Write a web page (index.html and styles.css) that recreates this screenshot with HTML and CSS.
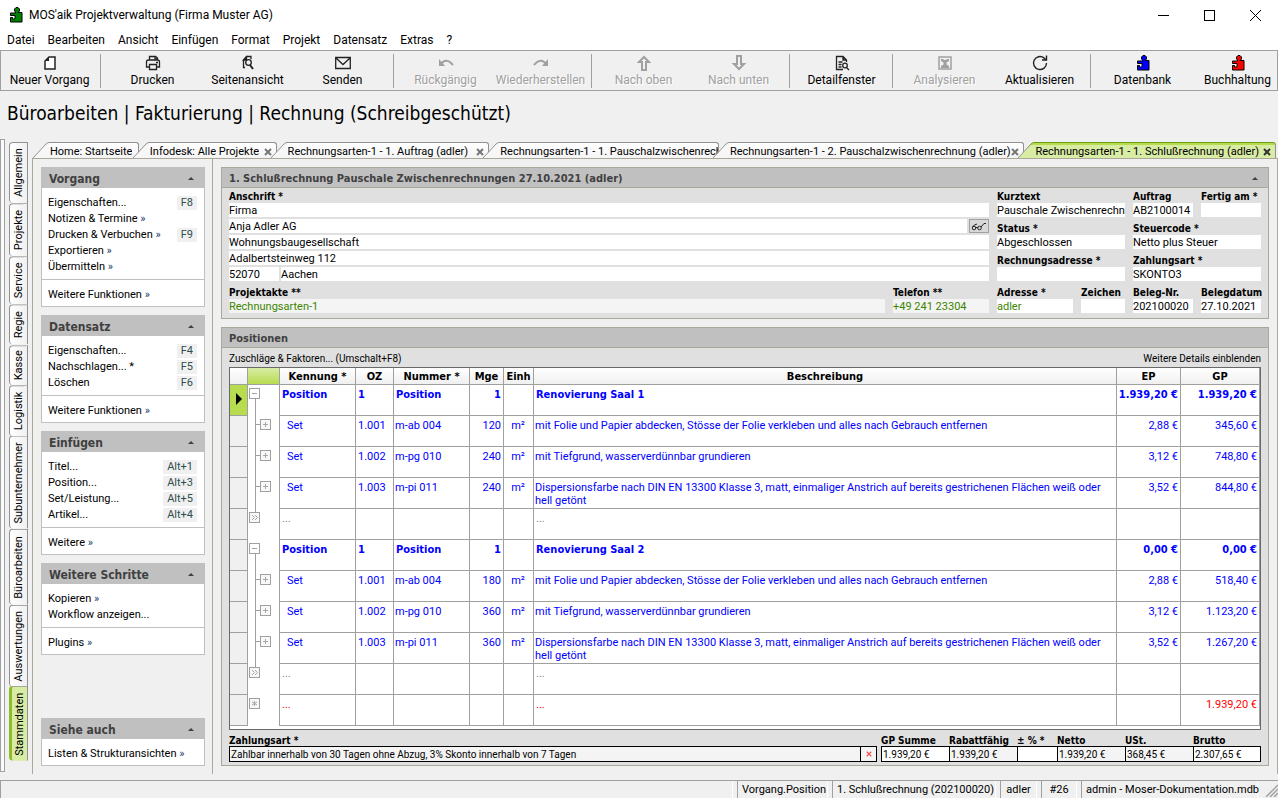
FILE: index.html
```html
<!DOCTYPE html>
<html lang="de">
<head>
    <meta charset="UTF-8">
    <meta name="viewport" content="width=device-width, initial-scale=1.0">
    <title>MOS'aik Projektverwaltung (Firma Muster AG)</title>
    <link rel="stylesheet" href="styles.css">
</head>
<body>
    <!-- Shared icon shapes -->
    <svg class="sprite" width="0" height="0" aria-hidden="true">
        <symbol id="puzzle" viewBox="0 0 14 16">
            <path d="M7 .5h2l1.500 1.500v2L9 5.500h4V15H1.500v-4.500h2V12H6V8.500H1.500V6h5V5L5.500 4V2z" fill="currentColor" stroke="#000" stroke-width="1"/>
        </symbol>
        <symbol id="close" viewBox="0 0 8 8">
            <path d="M1 1l6 6M7 1L1 7" fill="none" stroke="currentColor" stroke-width="2"/>
        </symbol>
        <symbol id="up" viewBox="0 0 6 4">
            <path d="M3 0l3 3H0z" fill="currentColor"/>
        </symbol>
        <symbol id="slant" viewBox="0 0 16 16">
            <path d="M0 16L13 2Q14.500 .5 16 .5V16z" fill="#f7f7f7"/>
            <path d="M0 16L13 2Q14.500 .5 16 .5" fill="none" stroke="#919191"/>
        </symbol>
        <symbol id="slant-active" viewBox="0 0 16 16">
            <path d="M0 16L13 2Q14.500 .5 16 .5V16z" fill="#d8eca4"/>
            <path d="M12 3L14 1h2v2z" fill="#b8dc50"/>
            <path d="M0 16L13 2" fill="none" stroke="#919191"/>
            <path d="M12.500 2.500Q14.500 .5 16 .5" fill="none" stroke="#6a9e10"/>
        </symbol>
        <symbol id="node-open" viewBox="0 0 32 31">
            <path d="M7.500 14v17" stroke="#a0a0a0"/>
            <rect x="1.500" y="3.500" width="10" height="10" fill="#fff" stroke="#a0a0a0"/>
            <path d="M4 8.500h5" stroke="#a0a0a0"/>
        </symbol>
        <symbol id="node-child" viewBox="0 0 32 31">
            <path d="M7.500 0v31M8 8.500h4" stroke="#a0a0a0"/>
            <rect x="12.500" y="3.500" width="10" height="10" fill="#f8f8f8" stroke="#a0a0a0"/>
            <path d="M15 8.500h5M17.500 6v5" stroke="#a8a8a8"/>
        </symbol>
        <symbol id="node-end" viewBox="0 0 32 31">
            <path d="M7.500 0v3" stroke="#a0a0a0"/>
            <rect x="1.500" y="3.500" width="10" height="10" fill="#f8f8f8" stroke="#a0a0a0"/>
            <path d="M4 6l2.500 2.500L4 11M7 6l2.500 2.500L7 11" fill="none" stroke="#a8a8b4"/>
        </symbol>
        <symbol id="node-new" viewBox="0 0 32 31">
            <rect x="1.500" y="3.500" width="10" height="10" fill="#f8f8f8" stroke="#a0a0a0"/>
            <path d="M6.500 6v5M4 7l5 3M9 7l-5 3" stroke="#a8a8a8"/>
        </symbol>
    </svg>

    <header class="titlebar">
        <svg class="app-icon" width="14" height="16"><use href="#puzzle"/></svg>
        <span class="title">MOS'aik Projektverwaltung (Firma Muster AG)</span>
        <div class="window-buttons">
            <button type="button" aria-label="Minimieren"><svg width="11" height="11"><path d="M0 5.500h11" stroke="#000"/></svg></button>
            <button type="button" aria-label="Maximieren"><svg width="11" height="11"><rect x=".5" y=".5" width="10" height="10" fill="none" stroke="#000"/></svg></button>
            <button type="button" aria-label="Schließen"><svg width="11" height="11"><path d="M0 0l11 11M11 0L0 11" stroke="#000"/></svg></button>
        </div>
    </header>

    <nav class="menubar">
        <a href="#">Datei</a>
        <a href="#">Bearbeiten</a>
        <a href="#">Ansicht</a>
        <a href="#">Einfügen</a>
        <a href="#">Format</a>
        <a href="#">Projekt</a>
        <a href="#">Datensatz</a>
        <a href="#">Extras</a>
        <a href="#">?</a>
    </nav>

    <div class="toolbar">
        <div class="tool-group">
            <button type="button"><svg width="16" height="16" viewBox="0 0 16 16"><path d="M7 2h6v12H3V6z" fill="#fff" stroke="#222" stroke-width="1.500"/><path d="M3 6h4V2z" fill="#222"/></svg>Neuer Vorgang</button>
        </div>
        <div class="tool-group">
            <button type="button"><svg width="16" height="16" viewBox="0 0 16 16" fill="none" stroke="#222" stroke-width="1.300"><path d="M4.500 5V1.500h6L12.500 3v2M4 12H1.500V7Q1.500 5 3.500 5h9Q14.500 5 14.500 7v5H12M4.500 9.500h7v5h-7z"/><path d="M10 1.500V4h2.500M11 7.500h2"/></svg>Drucken</button>
            <button type="button"><svg width="16" height="16" viewBox="0 0 16 16" fill="none" stroke="#222" stroke-width="1.300"><path d="M5 12.500H3.500V5l3-3.500h4.500V4"/><path d="M3.500 5h3V2z" fill="#222"/><circle cx="8.500" cy="7.500" r="2.800"/><path d="M10 10l3 4" stroke-width="2"/></svg>Seitenansicht</button>
            <button type="button"><svg width="16" height="16" viewBox="0 0 16 16" fill="none" stroke="#222" stroke-width="1.300"><path d="M.700 2.500h14.600v11H.700zM1 3l7 6.500L15 3"/></svg>Senden</button>
        </div>
        <div class="tool-group">
            <button type="button" disabled><svg width="16" height="16" viewBox="0 0 16 16" fill="none" stroke="#a0a0a0" stroke-width="2"><path d="M3 9Q8 2 15 10"/><path d="M1 4v7h6z" fill="#a0a0a0" stroke="none"/></svg>Rückgängig</button>
            <button type="button" disabled><svg width="16" height="16" viewBox="0 0 16 16" fill="none" stroke="#a0a0a0" stroke-width="2"><path d="M13 9Q8 2 1 10"/><path d="M15 4v7H9z" fill="#a0a0a0" stroke="none"/></svg>Wiederherstellen</button>
        </div>
        <div class="tool-group">
            <button type="button" disabled><svg width="16" height="16" viewBox="0 0 16 16" fill="none" stroke="#a0a0a0" stroke-width="2"><path d="M6 15V7H3l5-5 5 5h-3v8z"/></svg>Nach oben</button>
            <button type="button" disabled><svg width="16" height="16" viewBox="0 0 16 16" fill="none" stroke="#a0a0a0" stroke-width="2"><path d="M6 1v8H3l5 5 5-5h-3V1z"/></svg>Nach unten</button>
        </div>
        <div class="tool-group">
            <button type="button"><svg width="16" height="16" viewBox="0 0 16 16" fill="none" stroke="#222" stroke-width="1.300"><path d="M9 14.500H2.500v-13H9L12.500 5v2M9 1.500V5h3.500M4.500 7h4M4.500 9.500h3M4.500 12h3"/><circle cx="11" cy="10.500" r="2.300"/><path d="M12.500 12.500l2.500 2.500"/></svg>Detailfenster</button>
        </div>
        <div class="tool-group">
            <button type="button" disabled><svg width="16" height="16" viewBox="0 0 16 16" fill="none" stroke="#a0a0a0" stroke-width="1.500"><path d="M2 2h12v12H2z"/><path d="M4 4h2.500v1h3V4H12v2L9.500 7.500v2L12 11v2H4v-2l2.500-1.500v-2L4 6z" fill="#a0a0a0" stroke="none"/></svg>Analysieren</button>
            <button type="button"><svg width="16" height="16" viewBox="0 0 16 16" fill="none" stroke="#222" stroke-width="1.400"><path d="M14.500 8a6.500 6.500 0 1 1-2.500-5.100L14 5"/><path d="M14.500 .500V5H10"/></svg>Aktualisieren</button>
        </div>
        <div class="tool-group">
            <button type="button"><svg class="blue" width="14" height="16"><use href="#puzzle"/></svg>Datenbank</button>
            <button type="button"><svg class="red" width="14" height="16"><use href="#puzzle"/></svg>Buchhaltung</button>
        </div>
    </div>

    <h1 class="page-title">Büroarbeiten | Fakturierung | Rechnung (Schreibgeschützt)</h1>

    <div class="workspace">
        <div class="grip"></div>

        <nav class="side-tabs">
            <a href="#" class="side-allgemein">Allgemein</a>
            <a href="#" class="side-projekte">Projekte</a>
            <a href="#" class="side-service">Service</a>
            <a href="#" class="side-regie">Regie</a>
            <a href="#" class="side-kasse">Kasse</a>
            <a href="#" class="side-logistik">Logistik</a>
            <a href="#" class="side-sub">Subunternehmer</a>
            <a href="#" class="side-buero">Büroarbeiten</a>
            <a href="#" class="side-auswertungen">Auswertungen</a>
            <a href="#" class="side-stammdaten active">Stammdaten</a>
        </nav>

        <div class="content">
            <!-- Document tabs -->
            <div class="tabs">
                <div class="tab tab-home"><svg class="slant" width="16" height="16"><use href="#slant"/></svg><div class="tab-body"><a href="#">Home: Startseite</a></div></div>
                <div class="tab tab-infodesk"><svg class="slant" width="16" height="16"><use href="#slant"/></svg><div class="tab-body"><a href="#">Infodesk: Alle Projekte</a><button type="button" aria-label="Schließen"><svg width="8" height="8"><use href="#close"/></svg></button></div></div>
                <div class="tab tab-auftrag"><svg class="slant" width="16" height="16"><use href="#slant"/></svg><div class="tab-body"><a href="#">Rechnungsarten-1 - 1. Auftrag (adler)</a><button type="button" aria-label="Schließen"><svg width="8" height="8"><use href="#close"/></svg></button></div></div>
                <div class="tab tab-zwischen1"><svg class="slant" width="16" height="16"><use href="#slant"/></svg><div class="tab-body"><a href="#">Rechnungsarten-1 - 1. Pauschalzwischenrechnung (adler)</a></div></div>
                <div class="tab tab-zwischen2"><svg class="slant" width="16" height="16"><use href="#slant"/></svg><div class="tab-body"><a href="#">Rechnungsarten-1 - 2. Pauschalzwischenrechnung (adler)</a><button type="button" aria-label="Schließen"><svg width="8" height="8"><use href="#close"/></svg></button></div></div>
                <div class="tab tab-schluss active"><svg class="slant" width="16" height="16"><use href="#slant-active"/></svg><div class="tab-body"><a href="#">Rechnungsarten-1 - 1. Schlußrechnung (adler)</a><button type="button" aria-label="Schließen"><svg width="8" height="8"><use href="#close"/></svg></button></div></div>
            </div>

            <div class="columns">
                <aside class="sidebar">
                    <section class="card">
                        <h2>Vorgang<svg width="6" height="4"><use href="#up"/></svg></h2>
                        <ul>
                            <li><a href="#">Eigenschaften...</a><kbd>F8</kbd></li>
                            <li><a href="#">Notizen &amp; Termine <i>»</i></a></li>
                            <li><a href="#">Drucken &amp; Verbuchen <i>»</i></a><kbd>F9</kbd></li>
                            <li><a href="#">Exportieren <i>»</i></a></li>
                            <li><a href="#">Übermitteln <i>»</i></a></li>
                        </ul>
                        <ul>
                            <li><a href="#">Weitere Funktionen <i>»</i></a></li>
                        </ul>
                    </section>
                    <section class="card">
                        <h2>Datensatz<svg width="6" height="4"><use href="#up"/></svg></h2>
                        <ul>
                            <li><a href="#">Eigenschaften...</a><kbd>F4</kbd></li>
                            <li><a href="#">Nachschlagen... *</a><kbd>F5</kbd></li>
                            <li><a href="#">Löschen</a><kbd>F6</kbd></li>
                        </ul>
                        <ul>
                            <li><a href="#">Weitere Funktionen <i>»</i></a></li>
                        </ul>
                    </section>
                    <section class="card">
                        <h2>Einfügen<svg width="6" height="4"><use href="#up"/></svg></h2>
                        <ul>
                            <li><a href="#">Titel...</a><kbd>Alt+1</kbd></li>
                            <li><a href="#">Position...</a><kbd>Alt+3</kbd></li>
                            <li><a href="#">Set/Leistung...</a><kbd>Alt+5</kbd></li>
                            <li><a href="#">Artikel...</a><kbd>Alt+4</kbd></li>
                        </ul>
                        <ul>
                            <li><a href="#">Weitere <i>»</i></a></li>
                        </ul>
                    </section>
                    <section class="card">
                        <h2>Weitere Schritte<svg width="6" height="4"><use href="#up"/></svg></h2>
                        <ul>
                            <li><a href="#">Kopieren <i>»</i></a></li>
                            <li><a href="#">Workflow anzeigen...</a></li>
                        </ul>
                        <ul>
                            <li><a href="#">Plugins <i>»</i></a></li>
                        </ul>
                    </section>
                    <section class="card card-bottom">
                        <h2>Siehe auch<svg width="6" height="4"><use href="#up"/></svg></h2>
                        <ul>
                            <li><a href="#">Listen &amp; Strukturansichten <i>»</i></a></li>
                        </ul>
                    </section>
                </aside>

                <main class="main">
                    <!-- Document header data -->
                    <section class="panel">
                        <h2>1. Schlußrechnung Pauschale Zwischenrechnungen 27.10.2021 (adler)<svg width="6" height="4"><use href="#up"/></svg></h2>
                        <form class="head-form">
                            <div class="address">
                                <label for="anrede">Anschrift *</label>
                                <input type="text" id="anrede" value="Firma">
                                <div class="line">
                                    <input type="text" aria-label="Name" value="Anja Adler AG">
                                    <button type="button" aria-label="Ansehen"><svg width="16" height="9" viewBox="0 0 16 9" fill="none" stroke="#222"><circle cx="3" cy="6" r="1.800"/><circle cx="8.500" cy="6" r="1.800"/><path d="M1.500 5Q3 2.500 6 2M10 5l3-3.500h2M4.500 5.500h2.500"/></svg></button>
                                </div>
                                <input type="text" aria-label="Zusatz" value="Wohnungsbaugesellschaft">
                                <input type="text" aria-label="Straße" value="Adalbertsteinweg 112">
                                <div class="line">
                                    <input class="zip" type="text" aria-label="PLZ" value="52070">
                                    <input type="text" aria-label="Ort" value="Aachen">
                                </div>
                                <div class="line refs">
                                    <div class="field"><label for="akte">Projektakte **</label><input class="ref" type="text" id="akte" value="Rechnungsarten-1" readonly></div>
                                    <div class="field phone"><label for="telefon">Telefon **</label><input class="ref" type="text" id="telefon" value="+49 241 23304" readonly></div>
                                </div>
                            </div>
                            <div class="details">
                                <div class="field wide"><label for="kurztext">Kurztext</label><input type="text" id="kurztext" value="Pauschale Zwischenrechnungen"></div>
                                <div class="field"><label for="auftrag">Auftrag</label><input type="text" id="auftrag" value="AB2100014"></div>
                                <div class="field"><label for="fertig">Fertig am *</label><input type="text" id="fertig"></div>
                                <div class="field wide"><label for="status">Status *</label><input type="text" id="status" value="Abgeschlossen"></div>
                                <div class="field double"><label for="steuer">Steuercode *</label><input type="text" id="steuer" value="Netto plus Steuer"></div>
                                <div class="field wide"><label for="radresse">Rechnungsadresse *</label><input type="text" id="radresse"></div>
                                <div class="field double"><label for="zart">Zahlungsart *</label><input type="text" id="zart" value="SKONTO3"></div>
                                <div class="field"><label for="adresse">Adresse *</label><input class="link" type="text" id="adresse" value="adler"></div>
                                <div class="field"><label for="zeichen">Zeichen</label><input type="text" id="zeichen"></div>
                                <div class="field"><label for="beleg">Beleg-Nr.</label><input type="text" id="beleg" value="202100020"></div>
                                <div class="field"><label for="datum">Belegdatum</label><input type="text" id="datum" value="27.10.2021"></div>
                            </div>
                        </form>
                    </section>

                    <!-- Line items -->
                    <section class="panel positions">
                        <h2>Positionen</h2>
                        <div class="positions-links">
                            <a href="#">Zuschläge &amp; Faktoren... (Umschalt+F8)</a>
                            <a href="#">Weitere Details einblenden</a>
                        </div>
                        <div class="grid-frame">
                            <table class="grid">
                                <colgroup>
                                    <col class="c-mark"><col class="c-tree"><col class="c-kennung"><col class="c-oz"><col class="c-nummer"><col class="c-mge"><col class="c-einh"><col><col class="c-ep"><col class="c-gp">
                                </colgroup>
                                <thead>
                                    <tr><th></th><th class="corner"></th><th>Kennung *</th><th>OZ</th><th>Nummer *</th><th>Mge</th><th>Einh</th><th>Beschreibung</th><th>EP</th><th>GP</th></tr>
                                </thead>
                                <tbody>
                                    <tr class="position"><td class="mark current"><svg width="6" height="12"><path d="M0 0l6 6-6 6z"/></svg></td><td class="tree"><button type="button" aria-label="Zuklappen"><svg width="32" height="31"><use href="#node-open"/></svg></button></td><td>Position</td><td>1</td><td>Position</td><td class="num">1</td><td></td><td>Renovierung Saal 1</td><td class="num">1.939,20 €</td><td class="num">1.939,20 €</td></tr>
                                    <tr><td class="mark"></td><td class="tree"><button type="button" aria-label="Aufklappen"><svg width="32" height="31"><use href="#node-child"/></svg></button></td><td class="set">Set</td><td>1.001</td><td>m-ab 004</td><td class="num">120</td><td class="unit">m²</td><td>mit Folie und Papier abdecken, Stösse der Folie verkleben und alles nach Gebrauch entfernen</td><td class="num">2,88 €</td><td class="num">345,60 €</td></tr>
                                    <tr><td class="mark"></td><td class="tree"><button type="button" aria-label="Aufklappen"><svg width="32" height="31"><use href="#node-child"/></svg></button></td><td class="set">Set</td><td>1.002</td><td>m-pg 010</td><td class="num">240</td><td class="unit">m²</td><td>mit Tiefgrund, wasserverdünnbar grundieren</td><td class="num">3,12 €</td><td class="num">748,80 €</td></tr>
                                    <tr><td class="mark"></td><td class="tree"><button type="button" aria-label="Aufklappen"><svg width="32" height="31"><use href="#node-child"/></svg></button></td><td class="set">Set</td><td>1.003</td><td>m-pi 011</td><td class="num">240</td><td class="unit">m²</td><td>Dispersionsfarbe nach DIN EN 13300 Klasse 3, matt, einmaliger Anstrich auf bereits gestrichenen Flächen weiß oder hell getönt</td><td class="num">3,52 €</td><td class="num">844,80 €</td></tr>
                                    <tr class="more"><td class="mark"></td><td class="tree"><button type="button" aria-label="Weitere"><svg width="32" height="31"><use href="#node-end"/></svg></button></td><td>...</td><td></td><td></td><td></td><td></td><td>...</td><td></td><td></td></tr>
                                    <tr class="position"><td class="mark"></td><td class="tree"><button type="button" aria-label="Zuklappen"><svg width="32" height="31"><use href="#node-open"/></svg></button></td><td>Position</td><td>1</td><td>Position</td><td class="num">1</td><td></td><td>Renovierung Saal 2</td><td class="num">0,00 €</td><td class="num">0,00 €</td></tr>
                                    <tr><td class="mark"></td><td class="tree"><button type="button" aria-label="Aufklappen"><svg width="32" height="31"><use href="#node-child"/></svg></button></td><td class="set">Set</td><td>1.001</td><td>m-ab 004</td><td class="num">180</td><td class="unit">m²</td><td>mit Folie und Papier abdecken, Stösse der Folie verkleben und alles nach Gebrauch entfernen</td><td class="num">2,88 €</td><td class="num">518,40 €</td></tr>
                                    <tr><td class="mark"></td><td class="tree"><button type="button" aria-label="Aufklappen"><svg width="32" height="31"><use href="#node-child"/></svg></button></td><td class="set">Set</td><td>1.002</td><td>m-pg 010</td><td class="num">360</td><td class="unit">m²</td><td>mit Tiefgrund, wasserverdünnbar grundieren</td><td class="num">3,12 €</td><td class="num">1.123,20 €</td></tr>
                                    <tr><td class="mark"></td><td class="tree"><button type="button" aria-label="Aufklappen"><svg width="32" height="31"><use href="#node-child"/></svg></button></td><td class="set">Set</td><td>1.003</td><td>m-pi 011</td><td class="num">360</td><td class="unit">m²</td><td>Dispersionsfarbe nach DIN EN 13300 Klasse 3, matt, einmaliger Anstrich auf bereits gestrichenen Flächen weiß oder hell getönt</td><td class="num">3,52 €</td><td class="num">1.267,20 €</td></tr>
                                    <tr class="more"><td class="mark"></td><td class="tree"><button type="button" aria-label="Weitere"><svg width="32" height="31"><use href="#node-end"/></svg></button></td><td>...</td><td></td><td></td><td></td><td></td><td>...</td><td></td><td></td></tr>
                                    <tr class="total"><td class="mark"></td><td class="tree"><button type="button" aria-label="Neu"><svg width="32" height="31"><use href="#node-new"/></svg></button></td><td>...</td><td></td><td></td><td></td><td></td><td>...</td><td></td><td class="num">1.939,20 €</td></tr>
                                </tbody>
                            </table>
                        </div>
                        <form class="sums">
                            <div class="field payment">
                                <label for="zahlung">Zahlungsart *</label>
                                <div class="payment-box">
                                    <input class="soft" type="text" id="zahlung" value="Zahlbar innerhalb von 30 Tagen ohne Abzug, 3% Skonto innerhalb von 7 Tagen">
                                    <button type="button" aria-label="Entfernen"><svg width="6" height="6" viewBox="0 0 8 8"><path d="M1 1l6 6M7 1L1 7" stroke="#f05050" stroke-width="1.500"/></svg></button>
                                </div>
                            </div>
                            <div class="totals">
                                <div class="field"><label for="gp">GP Summe</label><input type="text" id="gp" value="1.939,20 €"></div>
                                <div class="field"><label for="rabatt">Rabattfähig</label><input class="soft" type="text" id="rabatt" value="1.939,20 €"></div>
                                <div class="field"><label for="prozent">± % *</label><input type="text" id="prozent"></div>
                                <div class="field"><label for="netto">Netto</label><input class="soft" type="text" id="netto" value="1.939,20 €"></div>
                                <div class="field"><label for="ust">USt.</label><input class="soft" type="text" id="ust" value="368,45 €"></div>
                                <div class="field"><label for="brutto">Brutto</label><input type="text" id="brutto" value="2.307,65 €"></div>
                            </div>
                        </form>
                    </section>
                </main>
            </div>
        </div>
    </div>

    <footer class="statusbar">
        <span class="fill"></span>
        <span class="s-view">Vorgang.Position</span>
        <span class="s-doc">1. Schlußrechnung (202100020)</span>
        <span class="s-user">adler</span>
        <span class="s-count">#26</span>
        <span class="s-db">admin - Moser-Dokumentation.mdb</span>
        <svg width="16" height="16"><path d="M4 16L16 4M8 16l8-8M12 16l4-4" stroke="#a0a0a0" stroke-width="1.500"/></svg>
    </footer>
</body>
</html>
```
FILE: styles.css
```css
* {
    box-sizing: border-box;
}

body {
    margin: 0;
    min-height: 100vh;
    display: flex;
    flex-direction: column;
    background-color: #f0f0f0;
    color: #000;
    font-family: Roboto, 'DejaVu Sans Condensed', sans-serif;
    font-size: 11px;
    line-height: 16px;
    overflow: hidden;
}

a {
    color: inherit;
    text-decoration: none;
}

button,
input {
    font: inherit;
    color: inherit;
    margin: 0;
    padding: 0;
    border: none;
    border-radius: 0;
    background: none;
}

svg {
    display: block;
    flex: none;
}

.sprite {
    position: absolute;
}

/* Title bar */
.titlebar {
    display: flex;
    align-items: center;
    height: 30px;
    padding-left: 9px;
    background-color: #fff;
    font-size: 12px;
}

.app-icon {
    color: #008000;
    margin-right: 6px;
}

.window-buttons {
    display: flex;
    margin-left: auto;
}

.window-buttons button {
    width: 46px;
    height: 28px;
    display: flex;
    align-items: center;
    justify-content: center;
}

/* Menu */
.menubar {
    display: flex;
    gap: 13px;
    height: 20px;
    padding: 2px 7px;
    background-color: #fff;
    font-size: 12px;
}

/* Toolbar */
.toolbar {
    display: flex;
    height: 41px;
    padding-left: 1px;
    border: 1px solid #a0a0a0;
    overflow: hidden;
    font-size: 12px;
}

.tool-group {
    display: flex;
    flex: none;
    padding-right: 8px;
    background: linear-gradient(#a0a0a0, #a0a0a0) right 4px center / 1px 34px no-repeat;
}

.tool-group:last-child {
    background: none;
}

.tool-group button {
    width: 95px;
    padding-top: 4px;
    display: flex;
    flex-direction: column;
    align-items: center;
    gap: 1px;
    white-space: nowrap;
}

.tool-group button:disabled {
    color: #a0a0a0;
    text-shadow: 1px 1px #fff;
}

.blue {
    color: #0000ff;
}

.red {
    color: #ff0000;
}

.page-title {
    margin: 0;
    padding: 10px 7px 14px;
    font-family: 'DejaVu Sans Condensed', 'DejaVu Sans', sans-serif;
    font-size: 19px;
    line-height: 24px;
    font-weight: normal;
}

/* Workspace */
.workspace {
    flex: 1;
    display: flex;
}

.grip {
    width: 5px;
    margin-bottom: 8px;
    border: 1px solid #a0a0a0;
    background-color: #fafafa;
}

.side-tabs {
    display: flex;
    flex-direction: column;
    width: 19px;
    margin: 3px 4px 19px;
}

.side-tabs a {
    display: flex;
    align-items: center;
    justify-content: center;
    writing-mode: vertical-rl;
    transform: rotate(180deg);
    min-height: 0;
    border: 1px solid #919191;
    border-radius: 0 4px 4px 0;
    border-top: none;
    background: linear-gradient(to left, #fff, #f0f0f0);
    line-height: 16px;
}

.side-tabs .active {
    background: #d8eca4;
    border-right: 3px solid #8fbc2c;
}

.side-allgemein { flex: 61 1 0; }
.side-projekte { flex: 53 1 0; }
.side-service { flex: 48 1 0; }
.side-regie { flex: 40 1 0; }
.side-kasse { flex: 40 1 0; }
.side-logistik { flex: 51 1 0; }
.side-sub { flex: 93 1 0; }
.side-buero { flex: 76 1 0; }
.side-auswertungen { flex: 82 1 0; }
.side-stammdaten { flex: 75 1 0; }

.content {
    flex: 1;
    min-width: 0;
    display: flex;
    flex-direction: column;
    padding-top: 3px;
    padding-bottom: 6px;
}

/* Document tabs */
.tabs {
    display: flex;
    height: 16px;
    padding: 0 2px 0 1px;
}

.tab {
    display: flex;
    min-width: 0;
    position: relative;
}

.tab + .tab {
    margin-left: -6px;
}

.tab-body {
    flex: 1;
    min-width: 0;
    display: flex;
    align-items: center;
    justify-content: space-between;
    padding: 2px 4px 0 1px;
    border: 1px solid #919191;
    border-width: 1px 1px 0 0;
    border-radius: 0 3px 0 0;
    background: linear-gradient(#fff, #f4f4f4);
    white-space: nowrap;
}

.tab-body a {
    min-width: 0;
    overflow: hidden;
}

.tab-body button {
    color: #777;
}

.tab-home { flex: 106 1 0; }
.tab-infodesk { flex: 144 1 0; }
.tab-auftrag { flex: 219 1 0; }
.tab-zwischen1 { flex: 236 1 0; }
.tab-zwischen2 { flex: 312 1 0; }
.tab-schluss { flex: 258 1 0; }

.tab-zwischen1 .tab-body {
    padding-right: 0;
}

.tab.active .tab-body {
    background: linear-gradient(#b8dc50 2px, #d8eca4 2px);
    border-top-color: #6a9e10;
}

.tab.active button {
    color: #333;
}

.columns {
    flex: 1;
    display: flex;
    border: 1px solid #aca899;
    border-bottom: none;
}

/* Sidebar */
.sidebar {
    width: 180px;
    padding: 8px 7px 8px 8px;
    border-right: 1px solid #aca899;
    display: flex;
    flex-direction: column;
    gap: 8px;
}

.card {
    border: 1px solid #c0c0c0;
    background-color: #fff;
}

.card-bottom {
    margin-top: auto;
}

.card h2,
.panel h2 {
    display: flex;
    align-items: center;
    justify-content: space-between;
    margin: 0;
    height: 20px;
    padding: 1px 10px 0 7px;
    background-color: #c0c0c0;
    color: #404040;
    font-family: 'DejaVu Sans Condensed', 'DejaVu Sans', sans-serif;
    font-size: 12px;
    font-weight: bold;
}

.card ul {
    list-style: none;
    margin: 0;
    padding: 6px 7px 4px 6px;
}

.card ul + ul {
    border-top: 1px solid #c0c0c0;
}

.card ul:not(:last-child) {
    padding-bottom: 5px;
}

.card li {
    display: flex;
    justify-content: space-between;
    align-items: center;
    height: 16px;
    padding-top: 2px;
}

.card i {
    font-style: normal;
    color: #1a3c6e;
}

.card kbd {
    padding: 0 4px;
    background-color: #f0f0f0;
    color: #2f4f4f;
    font-family: inherit;
    line-height: 14px;
}

/* Panels */
.main {
    flex: 1;
    min-width: 0;
    display: flex;
    flex-direction: column;
    gap: 8px;
    padding: 8px;
}

.panel {
    border: 1px solid #aca899;
    background-color: #e0e0e0;
}

.panel h2 {
    padding-top: 2px;
    border-bottom: 1px solid #aca899;
    font-size: 11px;
}

.panel label {
    display: block;
    height: 15px;
    padding-top: 1px;
    font-family: 'DejaVu Sans Condensed', 'DejaVu Sans', sans-serif;
    font-size: 10px;
    font-weight: bold;
    white-space: nowrap;
}

.head-form {
    display: flex;
    gap: 8px;
    padding: 0 7px 3px;
}

.head-form input {
    display: block;
    width: 100%;
    min-width: 0;
    height: 14px;
    margin-bottom: 2px;
    padding-top: 1px;
    background-color: #fff;
}

.address {
    flex: 1;
    min-width: 0;
}

.line {
    display: flex;
    gap: 2px;
}

.line button {
    width: 20px;
    height: 14px;
    display: flex;
    align-items: center;
    justify-content: center;
    flex: none;
    border: 1px solid #a0a0a0;
    background-color: #d8d8d8;
}

.line .zip {
    flex: 0 0 50px;
}

.refs {
    gap: 8px;
    margin-top: 1px;
}

.refs .field {
    flex: 1;
}

.refs .phone {
    flex: 0 0 96px;
}

.head-form .ref {
    background-color: #f4f4f4;
    color: #3c8500;
}

.head-form .link {
    color: #3c8500;
}

.details {
    display: grid;
    grid-template-columns: 76px 44px 60px 60px;
    gap: 1px 8px;
}

.wide,
.double {
    grid-column: span 2;
}

/* Positions */
.positions {
    flex: 1;
    display: flex;
    flex-direction: column;
}

.positions-links {
    display: flex;
    justify-content: space-between;
    padding: 3px 7px 0;
    height: 19px;
    font-size: 10px;
}

.grid-frame {
    flex: 1;
    margin: 0 7px;
    border: 1px solid #696969;
    background-color: #fff;
}

.grid {
    width: 100%;
    table-layout: fixed;
    border-collapse: separate;
    border-spacing: 0;
    color: #0000ff;
    line-height: 13px;
}

.c-mark { width: 18px; }
.c-tree { width: 32px; }
.c-kennung { width: 76px; }
.c-oz { width: 38px; }
.c-nummer { width: 76px; }
.c-mge { width: 34px; }
.c-einh { width: 30px; }
.c-ep { width: 64px; }
.c-gp { width: 79px; }

.grid th {
    height: 17px;
    padding: 0;
    border-right: 1px solid #a0a0a0;
    border-bottom: 1px solid #a0a0a0;
    background: linear-gradient(#fff, #f0f0f0);
    color: #000;
    font-family: 'DejaVu Sans Condensed', 'DejaVu Sans', sans-serif;
}

.grid .corner {
    background: linear-gradient(#d8eca4, #b8dc50);
}

.grid td {
    height: 31px;
    padding: 3px 2px 1px 1px;
    border-right: 1px solid #a0a0a0;
    border-bottom: 1px solid #a0a0a0;
    vertical-align: top;
}

.grid td:nth-child(4) {
    padding-left: 2px;
}

.grid .position {
    font-family: 'DejaVu Sans Condensed', 'DejaVu Sans', sans-serif;
    font-weight: bold;
}

.grid .position td {
    padding-left: 2px;
}

.grid .set {
    padding-left: 7px;
}

.grid .num,
.grid .position .num {
    padding-left: 0;
    text-align: right;
    white-space: nowrap;
}

.grid .unit {
    text-align: center;
}

.grid .mark {
    background-color: #f0f0f0;
}

.grid .position .current {
    padding: 8px 0 0 6px;
    background-color: #b8dc50;
}

.grid .tree,
.grid .position .tree {
    padding: 0;
    border-bottom: none;
}

.tree button {
    display: block;
    width: 31px;
    height: 31px;
    overflow: hidden;
}

.grid .more td {
    color: #808080;
    padding-left: 2px;
}

.grid .total td {
    color: #ff0000;
    padding-left: 2px;
}

.grid .more .tree,
.grid .total .tree {
    padding: 0;
}

/* Sums below the grid */
.sums {
    display: flex;
    gap: 4px;
    padding: 1px 7px 3px;
    font-size: 10px;
}

.sums label {
    padding-top: 2px;
}

.payment {
    flex: 1;
}

.payment-box {
    display: flex;
    height: 16px;
    border: 1px solid #000;
}

.payment-box input {
    flex: 1;
    min-width: 0;
    padding: 1px 0 0 1px;
}

.payment-box button {
    display: flex;
    align-items: center;
    justify-content: center;
    width: 16px;
    border-left: 1px solid #000;
    background-color: #f4f4f4;
}

.totals {
    display: grid;
    grid-template-columns: 68px 68px 40px 68px 68px 68px;
}

.totals input {
    display: block;
    width: 100%;
    height: 16px;
    padding: 1px 0 0 1px;
    border: 1px solid #000;
    border-right: none;
    background-color: #fff;
}

.totals .field:last-child input {
    border-right: 1px solid #000;
}

.sums .soft {
    background-color: #f4f4f4;
}

/* Status bar */
.statusbar {
    display: flex;
    gap: 4px;
    height: 18px;
    border-top: 1px solid #a0a0a0;
}

.statusbar span {
    flex: none;
    padding: 1px 0 0 4px;
    border-left: 1px solid #a0a0a0;
    border-right: 1px solid #fff;
    white-space: nowrap;
}

.statusbar .fill {
    flex: 1;
}

.s-view { width: 91px; }
.s-doc { width: 164px; }
.s-user { width: 37px; }
.s-count { width: 36px; }
.s-db { width: 177px; }

.statusbar .s-user,
.statusbar .s-count {
    padding-left: 0;
    text-align: center;
}
```
